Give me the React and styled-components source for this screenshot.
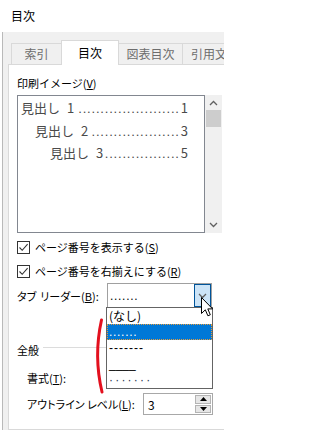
import React from "react";
import styled, { createGlobalStyle } from "styled-components";

const GlobalStyle = createGlobalStyle`
  html, body {
    margin: 0;
    padding: 0;
    background: #fff;
  }
  body {
    font-family: "Noto Sans CJK JP", "Noto Sans", sans-serif;
    font-size: 11px;
    color: #000;
  }
`;

const Window = styled.div`
  width: 224px;
  height: 430px;
  overflow: hidden;
  display: flex;
  flex-direction: column;
  background: #fff;
`;

const TitleBar = styled.div`
  flex: none;
  height: 32px;
  box-sizing: border-box;
  padding: 0 0 2px 11px;
  display: flex;
  align-items: center;
  font-size: 12px;
`;

const Frame = styled.div`
  flex: 1;
  min-height: 0;
  margin-left: 2px;
  border-left: 1px solid #b9b9b9;
  background: #f0f0f0;
  padding: 8px 0 0 5px;
  display: flex;
  flex-direction: column;
`;

const TabStrip = styled.div`
  flex: none;
  height: 25px;
  margin-bottom: -1px;
  padding-left: 3px;
  display: flex;
  align-items: flex-end;
  white-space: nowrap;
  position: relative;
  z-index: 1;
`;

const Tab = styled.div`
  flex: none;
  box-sizing: border-box;
  width: ${(p) => p.$w}px;
  height: ${(p) => (p.$active ? 25 : 22)}px;
  margin-left: -1px;
  padding-bottom: 1px;
  display: flex;
  align-items: center;
  justify-content: center;
  border: 1px solid #d9d9d9;
  border-bottom: ${(p) => (p.$active ? "none" : "1px solid #d9d9d9")};
  background: ${(p) => (p.$active ? "#fff" : "#f0f0f0")};
  color: ${(p) => (p.$active ? "#000" : "#6d6d6d")};
  font-size: 12px;
  position: relative;
  z-index: ${(p) => (p.$active ? 2 : 1)};

  &:first-child {
    margin-left: 0;
  }
`;

const Panel = styled.div`
  flex: 1;
  margin-right: -20px;
  background: #fff;
  border: 1px solid #d9d9d9;
  padding: 10px 0 0 8px;
  display: flex;
  flex-direction: column;
  position: relative;
`;

const Label = styled.div`
  flex: none;
  height: 16px;
  line-height: 16px;
  white-space: nowrap;
  padding-left: ${(p) => p.$indent || 0}px;
  margin-top: ${(p) => p.$top || 0}px;
`;

const PreviewRow = styled.div`
  flex: none;
  display: flex;
  height: 138px;
  margin-top: 4px;
`;

const PreviewBox = styled.div`
  width: 188px;
  box-sizing: border-box;
  border: 1px solid #828790;
  padding: 3px 16px 0 3px;
  display: flex;
  flex-direction: column;
  gap: 4.5px;
`;

const PreviewLine = styled.div`
  display: flex;
  align-items: baseline;
  height: 18px;
  line-height: 18px;
  padding-left: ${(p) => p.$indent}px;
  font-size: 13px;
  color: #4a4a4a;
  white-space: nowrap;
`;

const HeadingNumber = styled.span`
  margin-left: 7px;
`;

const Leader = styled.span`
  flex: 1;
  min-width: 0;
  overflow: hidden;
  text-align: right;
  padding-right: 1px;
  font-family: "Liberation Sans", sans-serif;
  letter-spacing: 0.8px;
`;

const ScrollBar = styled.div`
  width: 17px;
  background: #f0f0f0;
  display: flex;
  flex-direction: column;
`;

const ScrollButton = styled.div`
  flex: none;
  height: ${(p) => p.$h}px;
  display: flex;
  align-items: center;
  justify-content: center;
`;

const Thumb = styled.div`
  flex: none;
  height: 17px;
  margin: 0 1px;
  background: #cdcdcd;
`;

const Spacer = styled.div`
  flex: 1;
`;

const CheckRow = styled.label`
  flex: none;
  height: 16px;
  margin-top: ${(p) => p.$top}px;
  display: flex;
  align-items: center;
  gap: 5px;
  white-space: nowrap;
`;

const CheckBox = styled.span`
  flex: none;
  width: 13px;
  height: 13px;
  box-sizing: border-box;
  border: 1px solid #333;
  background: #fff;
  display: flex;
  align-items: center;
  justify-content: center;
`;

const FieldRow = styled.div`
  flex: none;
  height: ${(p) => p.$h}px;
  margin-top: ${(p) => p.$top}px;
  display: flex;
  align-items: center;
`;

const FieldLabel = styled.div`
  flex: none;
  width: ${(p) => p.$w}px;
  box-sizing: border-box;
  padding-left: ${(p) => p.$indent || 0}px;
  white-space: nowrap;
  font-feature-settings: ${(p) => (p.$tight ? '"palt"' : "normal")};
`;

const WordGap = styled.span`
  display: inline-block;
  width: 4px;
`;

const Combo = styled.div`
  flex: none;
  width: 105px;
  height: 25px;
  box-sizing: border-box;
  border: 1px solid #a0a0a0;
  background: #fff;
  display: flex;
  position: relative;
`;

const ComboValue = styled.div`
  flex: 1;
  display: flex;
  align-items: center;
  padding-left: 2px;
`;

const ComboButton = styled.div`
  flex: none;
  width: 17px;
  box-sizing: border-box;
  border: 1px solid #005499;
  background: #cce4f7;
  display: flex;
  align-items: center;
  justify-content: center;
`;

const LeaderSample = styled.span`
  font-family: "Liberation Sans", sans-serif;
  font-size: 12px;
  line-height: 16px;
  letter-spacing: ${(p) => p.$spacing}px;
  color: ${(p) => p.$color || "inherit"};
`;

const DropList = styled.div`
  position: absolute;
  left: -2px;
  top: 23px;
  width: 107px;
  box-sizing: border-box;
  border: 1px solid #646464;
  background: #fff;
  z-index: 5;
`;

const DropItem = styled.div`
  height: 16px;
  line-height: 16px;
  padding-left: 2px;
  display: flex;
  align-items: center;
  white-space: nowrap;
  font-size: 12px;
  background: ${(p) => (p.$selected ? "#0078d7" : "transparent")};
  color: ${(p) => (p.$selected ? "#fff" : "#000")};
  outline: ${(p) => (p.$selected ? "1px dotted #e69c3c" : "none")};
  outline-offset: -1px;
`;

const Cursor = styled.svg`
  position: absolute;
  left: 93px;
  top: 13px;
  z-index: 6;
  overflow: visible;
`;

const GroupHeader = styled.div`
  flex: none;
  width: 190px;
  height: 16px;
  margin-top: 34px;
  display: flex;
  align-items: center;
  gap: 4px;
  white-space: nowrap;
`;

const GroupLine = styled.div`
  flex: 1;
  height: 1px;
  margin-bottom: 6px;
  background: #dcdcdc;
`;

const Spinner = styled.div`
  flex: none;
  width: 70px;
  height: 22px;
  box-sizing: border-box;
  border: 1px solid #a8a8a8;
  background: #fff;
  display: flex;
`;

const SpinValue = styled.div`
  flex: 1;
  display: flex;
  align-items: center;
  padding-left: 4px;
  font-size: 12px;
`;

const SpinColumn = styled.div`
  flex: none;
  width: 16px;
  padding: 1px 1px 1px 0;
  display: flex;
  flex-direction: column;
  gap: 1px;
`;

const SpinButton = styled.div`
  flex: 1;
  box-sizing: border-box;
  border: 1px solid #b4b4b4;
  background: #e6e6e6;
  display: flex;
  align-items: center;
  justify-content: center;
`;

const Annotation = styled.svg`
  position: absolute;
  left: 83px;
  top: 251px;
  z-index: 7;
  overflow: visible;
`;

const Chevron = ({ up }) => (
  <svg width="9" height="6" viewBox="0 0 9 6">
    <path
      d={up ? "M1 5 L4.5 1.5 L8 5" : "M1 1 L4.5 4.5 L8 1"}
      fill="none"
      stroke="#606060"
      strokeWidth="1.3"
    />
  </svg>
);

const Triangle = ({ up }) => (
  <svg width="7" height="4" viewBox="0 0 7 4">
    <path d={up ? "M0 4 L3.5 0 L7 4 Z" : "M0 0 L3.5 4 L7 0 Z"} fill="#000" />
  </svg>
);

const Check = () => (
  <svg width="11" height="11" viewBox="0 0 11 11">
    <path d="M1.5 5.5 L4.2 8.3 L9.6 2.2" fill="none" stroke="#333" strokeWidth="1.1" />
  </svg>
);

const headings = [
  { number: "1", page: "1", indent: 0, dots: 23 },
  { number: "2", page: "3", indent: 14, dots: 20 },
  { number: "3", page: "5", indent: 29, dots: 17 },
];

const App = () => (
  <>
    <GlobalStyle />
    <Window>
      <TitleBar>目次</TitleBar>
      <Frame>
        <TabStrip>
          <Tab $w={51}>索引</Tab>
          <Tab $w={58} $active>目次</Tab>
          <Tab $w={65}>図表目次</Tab>
          <Tab $w={90}>引用文献一覧</Tab>
        </TabStrip>
        <Panel>
          <Label>
            印刷イメージ(<u>V</u>)
          </Label>
          <PreviewRow>
            <PreviewBox>
              {headings.map((h) => (
                <PreviewLine key={h.page} $indent={h.indent}>
                  <span>見出し</span>
                  <HeadingNumber>{h.number}</HeadingNumber>
                  <Leader>{".".repeat(h.dots)}</Leader>
                  <span>{h.page}</span>
                </PreviewLine>
              ))}
            </PreviewBox>
            <ScrollBar>
              <ScrollButton $h={15}>
                <Chevron up />
              </ScrollButton>
              <Thumb />
              <Spacer />
              <ScrollButton $h={16}>
                <Chevron />
              </ScrollButton>
            </ScrollBar>
          </PreviewRow>

          <CheckRow $top={6}>
            <CheckBox>
              <Check />
            </CheckBox>
            <span>
              ページ番号を表示する(<u>S</u>)
            </span>
          </CheckRow>
          <CheckRow $top={8}>
            <CheckBox>
              <Check />
            </CheckBox>
            <span>
              ページ番号を右揃えにする(<u>R</u>)
            </span>
          </CheckRow>

          <FieldRow $h={25} $top={4}>
            <FieldLabel $w={90} $tight>
              タブ<WordGap />リーダー(<u>B</u>):
            </FieldLabel>
            <Combo>
              <ComboValue>
                <LeaderSample $spacing={0.7}>.......</LeaderSample>
              </ComboValue>
              <ComboButton>
                <Chevron />
              </ComboButton>
              <DropList>
                <DropItem>(なし)</DropItem>
                <DropItem $selected>
                  <LeaderSample $spacing={0.7}>.......</LeaderSample>
                </DropItem>
                <DropItem>
                  <LeaderSample $spacing={1}>-------</LeaderSample>
                </DropItem>
                <DropItem>
                  <LeaderSample $spacing={0}>____</LeaderSample>
                </DropItem>
                <DropItem>
                  <LeaderSample $spacing={2.2} $color="#1f3550">
                    ·······
                  </LeaderSample>
                </DropItem>
              </DropList>
              <Cursor width="12" height="20" viewBox="0 0 12 20">
                <path
                  d="M0.5 0.5 L0.5 16.5 L4.3 12.8 L6.9 18.8 L9.3 17.8 L6.8 11.9 L11.6 11.9 Z"
                  fill="#fff"
                  stroke="#000"
                  strokeWidth="1"
                  strokeLinejoin="miter"
                />
              </Cursor>
            </Combo>
          </FieldRow>

          <GroupHeader>
            全般
            <GroupLine />
          </GroupHeader>

          <Label $indent={10} $top={12}>
            書式(<u>T</u>):
          </Label>

          <FieldRow $h={22} $top={7}>
            <FieldLabel $w={126} $indent={10} $tight>
              アウトライン レベル(<u>L</u>):
            </FieldLabel>
            <Spinner>
              <SpinValue>3</SpinValue>
              <SpinColumn>
                <SpinButton>
                  <Triangle up />
                </SpinButton>
                <SpinButton>
                  <Triangle />
                </SpinButton>
              </SpinColumn>
            </Spinner>
          </FieldRow>

          <Annotation width="16" height="80" viewBox="0 0 16 80">
            <path
              d="M9.5 4 Q1.5 40 10 76"
              fill="none"
              stroke="#e3101e"
              strokeWidth="3"
              strokeLinecap="round"
            />
          </Annotation>
        </Panel>
      </Frame>
    </Window>
  </>
);

export default App;
